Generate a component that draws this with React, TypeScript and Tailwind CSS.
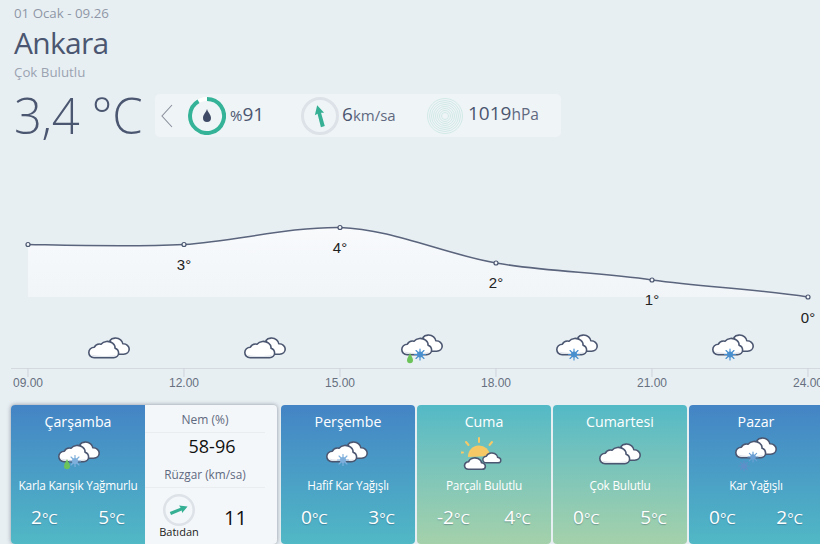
import React from "react";

const ink = "#4b5670";

function Drop({ x, y }: { x: number; y: number }) {
  return (
    <path
      transform={`translate(${x} ${y})`}
      d="M3 0 C4 3 6 4.6 6 7.2 A3 3 0 0 1 0 7.2 C0 4.6 2 3 3 0 Z"
      fill="#6cc35a"
    />
  );
}

function Flake({ x, y, color = "#4a90cf", r = 5.5 }: { x: number; y: number; color?: string; r?: number }) {
  const d = r * 0.72;
  return (
    <g transform={`translate(${x} ${y})`} stroke={color} strokeWidth="1.2" strokeLinecap="round">
      <circle r={r * 0.55} fill={color} stroke="none" />
      <line x1={-r} y1="0" x2={r} y2="0" />
      <line x1="0" y1={-r} x2="0" y2={r} />
      <line x1={-d} y1={-d} x2={d} y2={d} />
      <line x1={-d} y1={d} x2={d} y2={-d} />
    </g>
  );
}

// cloud pair, 42 x 22 box, same drawing for chart and cards
function Clouds({ x = 0, y = 0 }: { x?: number; y?: number }) {
  return (
    <g transform={`translate(${x} ${y})`} strokeLinejoin="round">
      <path
        d="M22 3.5 C24 0.6 29.5 0.2 32.6 2.8 C34.2 4.2 34.8 5.6 34.8 6.8 C38.6 6.6 41.2 9.2 41.2 12 C41.2 15 38.8 17.2 35.6 17.2 H27 Z"
        fill="#fff"
        stroke={ink}
        strokeWidth="1.6"
      />
      <path
        d="M6.2 20.6 C2.8 20.6 0.8 18.2 0.8 15.6 C0.8 12.6 3.2 10.2 6.4 10.2 C8 6.8 11 6.8 13 7.2 C15.6 4 21 3.4 24.6 6.2 C26.4 7.6 27.2 9.6 27 11.2 C29.4 12 30.6 14 30.6 16 C30.6 18.6 28.6 20.6 25.6 20.6 Z"
        fill="#fff"
        stroke={ink}
        strokeWidth="1.6"
      />
      <path d="M3 17.6 C8 19.4 20 19.4 28 18 L26 20 H6 Z" fill="#dfe3ea" />
    </g>
  );
}

function Sun() {
  return (
    <g>
      <path d="M10 20 A11 11 0 0 1 32 19 Z" fill="#f7c966" />
      <g stroke="#f7c966" strokeWidth="2" strokeLinecap="round">
        <line x1="21" y1="1" x2="21" y2="5" />
        <line x1="8" y1="5" x2="10.5" y2="8" />
        <line x1="34" y1="5" x2="31.5" y2="8" />
        <line x1="1" y1="15.5" x2="5" y2="15.5" />
      </g>
    </g>
  );
}

function SmallCloud({ x, y, s }: { x: number; y: number; s: number }) {
  return (
    <path
      transform={`translate(${x} ${y}) scale(${s})`}
      d="M5 14 C2.4 14 1 12.2 1 10.4 C1 8.2 2.8 6.6 5 6.6 C6.4 2.4 13.4 1.4 16.6 5.2 C17.4 6.2 17.6 7 17.6 7.6 C20 8 21.4 9.6 21.4 11 C21.4 12.8 20 14 18 14 Z"
      fill="#fff"
      stroke={ink}
      strokeWidth="1.6"
      strokeLinejoin="round"
    />
  );
}

function WeatherIcon({ type }: { type: "sleet" | "lightSnow" | "partly" | "cloudy" | "snow" }) {
  return (
    <svg width="46" height="36" viewBox="0 0 46 36" className="block">
      {type === "partly" && (
        <>
          <g transform="translate(-3 0)">
            <Sun />
          </g>
          <SmallCloud x={21} y={13.5} s={0.88} />
          <SmallCloud x={2.5} y={18} s={1.02} />
        </>
      )}
      {type === "sleet" && (
        <>
          <Clouds x={3} y={4} />
          <Flake x={20} y={24} color="#7fb0dc" />
          <Drop x={9} y={22} />
        </>
      )}
      {type === "lightSnow" && (
        <>
          <Clouds x={1} y={4} />
          <Flake x={18} y={23} color="#7fb0dc" />
        </>
      )}
      {type === "cloudy" && <Clouds x={2} y={6} />}
      {type === "snow" && (
        <>
          <Clouds x={2} y={0} />
          <Flake x={20} y={20} color="#6a9fd4" r={5} />
          <Flake x={11} y={29} color="#5f8fc8" r={5} />
        </>
      )}
    </svg>
  );
}

function Compass({ size, angle, stroke }: { size: number; angle: number; stroke: number }) {
  return (
    <svg width={size} height={size} viewBox="0 0 38 38" className="block shrink-0">
      <circle cx="19" cy="19" r={19 - stroke / 2} fill="none" stroke="#dde2e8" strokeWidth={stroke} />
      <path
        transform={`rotate(${angle} 19 19)`}
        d="M19 8 L23.8 17 L20.8 16.2 L21 30 L17 30 L17.2 16.2 L14.2 17 Z"
        fill="#35b094"
      />
    </svg>
  );
}

function ChartIcon({ x, y, rain, snow }: { x: number; y: number; rain?: boolean; snow?: number }) {
  return (
    <g>
      <Clouds x={x} y={y} />
      {snow !== undefined && <Flake x={x + snow} y={y + 20.5} />}
      {rain && <Drop x={x + 6} y={y + 19} />}
    </g>
  );
}

function Chart() {
  const times = ["09.00", "12.00", "15.00", "18.00", "21.00", "24.00"];
  const xs = [28, 184, 340, 496, 652, 808];
  const points = [
    [184, 244.5, "3°", 270],
    [340, 227.5, "4°", 253],
    [496, 263, "2°", 288],
    [652, 280, "1°", 305],
    [808, 297, "0°", 323],
  ] as const;
  const curve =
    "M28 244.5 C80 245.5 132 247 184 244.5 C236 241 288 227 340 227.5 C392 229 444 254 496 263 C548 272 600 272 652 280 C704 287 756 289 808 297";

  return (
    <svg width="820" height="268" viewBox="0 137 820 268" className="block shrink-0">
      <defs>
        <linearGradient id="area" x1="0" y1="0" x2="0" y2="1">
          <stop offset="0" stopColor="#f8fafc" />
          <stop offset="1" stopColor="#f1f5f8" />
        </linearGradient>
      </defs>
      <path d={`${curve} L808 297 L28 297 Z`} fill="url(#area)" />
      <path d={curve} fill="none" stroke="#5a647c" strokeWidth="1.5" />
      <circle cx="28" cy="244.5" r="2" fill="#f4f7f9" stroke="#4b5670" strokeWidth="1.2" />
      {points.map(([x, y, label, ly]) => (
        <g key={x}>
          <circle cx={x} cy={y} r="2" fill="#f4f7f9" stroke="#4b5670" strokeWidth="1.2" />
          <text x={x} y={ly} textAnchor="middle" fontSize="15" fill="#222" fontFamily="'Liberation Sans', sans-serif">
            {label}
          </text>
        </g>
      ))}
      <ChartIcon x={88} y={337} />
      <ChartIcon x={244} y={337} />
      <ChartIcon x={401} y={334} rain snow={19} />
      <ChartIcon x={556} y={334} snow={18} />
      <ChartIcon x={712} y={334} snow={18} />
      <line x1="11" y1="368.5" x2="820" y2="368.5" stroke="#d3d9df" />
      {times.map((t, i) => (
        <g key={t}>
          <line x1={xs[i]} y1="368" x2={xs[i]} y2="377" stroke="#cdd3d9" />
          <text x={xs[i]} y="387" textAnchor="middle" fontSize="12" fill="#66707f" fontFamily="'Liberation Sans', sans-serif">
            {t}
          </text>
        </g>
      ))}
    </svg>
  );
}

function Temp({ value }: { value: string }) {
  return (
    <span className="text-[19px] leading-none text-white [text-shadow:0_1px_1px_rgba(40,60,90,0.35)]">
      {value}
      <span className="text-[15px]">°C</span>
    </span>
  );
}

function DayFace({
  day,
  desc,
  low,
  high,
  icon,
  className,
}: {
  day: string;
  desc: string;
  low: string;
  high: string;
  icon: "sleet" | "lightSnow" | "partly" | "cloudy" | "snow";
  className: string;
}) {
  return (
    <div className={`flex h-full w-[134px] shrink-0 flex-col items-center pt-[6px] ${className}`}>
      <div className="text-[14.2px] leading-[22px] text-white">{day}</div>
      <div className="mt-[4px] h-[36px]">
        <WeatherIcon type={icon} />
      </div>
      <div className="mt-[3px] whitespace-nowrap text-[11.8px] leading-[18px] tracking-[-0.2px] text-white">{desc}</div>
      <div className="mt-[14px] flex w-full justify-between px-[20px]">
        <Temp value={low} />
        <Temp value={high} />
      </div>
    </div>
  );
}

const blue = "rounded-[4px] bg-gradient-to-b from-[#4484c5] to-[#51b8c5]";
const teal = "rounded-[4px] bg-gradient-to-b from-[#52b9c6] to-[#a4d1aa]";

export default function App() {
  return (
    <div
      className="flex h-[544px] w-[820px] flex-col overflow-hidden bg-[#e8eff3]"
      style={{ fontFamily: "'Open Sans', sans-serif" }}
    >
      <div className="flex h-[137px] shrink-0 flex-col pl-[14px]">
        <div className="h-[26px] text-[13.3px] leading-[26px] text-[#8f97a6]">01 Ocak - 09.26</div>
        <div className="h-[36px] text-[30px] leading-[34px] tracking-[-0.7px] text-[#4b5670]">Ankara</div>
        <div className="h-[20px] text-[13.3px] leading-[20px] text-[#9ba3b1]">Çok Bulutlu</div>
        <div className="mt-[12px] flex h-[43px] items-center">
          <div className="w-[141px] whitespace-nowrap text-[49px] font-[350] leading-none tracking-[-0.4px] text-[#4b5670]">
            3,4 °C
          </div>
          <div className="flex h-[43px] w-[406px] items-center rounded-[5px] bg-[#eff4f7]">
            <svg width="12" height="24" viewBox="0 0 12 24" className="ml-[6px] shrink-0">
              <path d="M11 1 L1 12 L11 23" fill="none" stroke="#8a919c" strokeWidth="1.1" />
            </svg>
            <svg width="38" height="38" viewBox="0 0 38 38" className="ml-[15px] shrink-0">
              <circle cx="19" cy="19" r="17" fill="none" stroke="#fff" strokeWidth="4" />
              <path d="M19 2 A17 17 0 1 1 10.5 4.3" fill="none" stroke="#35b398" strokeWidth="4" />
              <path d="M19 12 C19.6 15 23 17.5 23 21 A4 4 0 0 1 15 21 C15 17.5 18.4 15 19 12 Z" fill="#3f4b66" />
            </svg>
            <div className="ml-[4px] w-[71px] whitespace-nowrap pb-[2px] text-[#4b5670]">
              <span className="text-[15px]">%</span>
              <span className="text-[19px] leading-none">91</span>
            </div>
            <Compass size={38} angle={-15} stroke={3} />
            <div className="ml-[3px] w-[85px] whitespace-nowrap pb-[2px] text-[#4b5670]">
              <span className="text-[19px] leading-none">6</span>
              <span className="text-[15px] text-[#5f6980]">km/sa</span>
            </div>
            <svg width="36" height="36" viewBox="0 0 36 36" className="shrink-0">
              <g fill="none" stroke="#cde8e4" strokeWidth="0.9">
                {[3.5, 5.5, 7.5, 9.5, 11.5, 13.5, 15.5, 17.5].map((r) => (
                  <circle key={r} cx="18" cy="18" r={r} />
                ))}
              </g>
            </svg>
            <div className="ml-[5px] whitespace-nowrap pb-[2px] text-[#4b5670]">
              <span className="text-[19px] leading-none">1019</span>
              <span className="text-[15.5px] text-[#5f6980]">hPa</span>
            </div>
          </div>
        </div>
      </div>

      <Chart />

      <div className="flex h-[139px] shrink-0 pl-[11px]">
        <div className="flex h-full w-[266px] shrink-0 overflow-hidden rounded-[4px] bg-[#f4f7f9] shadow-[0_0_4px_rgba(60,70,90,0.55)]">
          <DayFace day="Çarşamba" desc="Karla Karışık Yağmurlu" low="2" high="5" icon="sleet" className="bg-gradient-to-b from-[#4484c5] to-[#51b8c5]" />
          <div className="flex flex-1 flex-col pr-[12px]">
            <div className="h-[28px] border-b border-[#e9edf0] pt-[1px] text-center text-[12px] leading-[28px] text-[#5f6980]">Nem (%)</div>
            <div className="h-[26px] pl-[14px] text-center text-[18px] leading-[26px] text-[#111]">58-96</div>
            <div className="h-[29px] border-b border-[#e9edf0] pt-[1px] text-center text-[11.8px] leading-[28px] text-[#5f6980]">Rüzgar (km/sa)</div>
            <div className="flex flex-1 items-start pl-[10px]">
              <div className="flex w-[48px] flex-col items-center pt-[6px]">
                <Compass size={32} angle={68} stroke={3} />
                <div className="mt-[-1px] text-[11px] leading-[14px] text-[#222]">Batıdan</div>
              </div>
              <div className="ml-[21px] pt-[18px] text-[20px] leading-[24px] text-[#111]">11</div>
            </div>
          </div>
        </div>
        <div className="ml-[4px] flex gap-[2px]">
          <DayFace day="Perşembe" desc="Hafif Kar Yağışlı" low="0" high="3" icon="lightSnow" className={blue} />
          <DayFace day="Cuma" desc="Parçalı Bulutlu" low="-2" high="4" icon="partly" className={teal} />
          <DayFace day="Cumartesi" desc="Çok Bulutlu" low="0" high="5" icon="cloudy" className={teal} />
          <DayFace day="Pazar" desc="Kar Yağışlı" low="0" high="2" icon="snow" className={blue} />
        </div>
      </div>
    </div>
  );
}
